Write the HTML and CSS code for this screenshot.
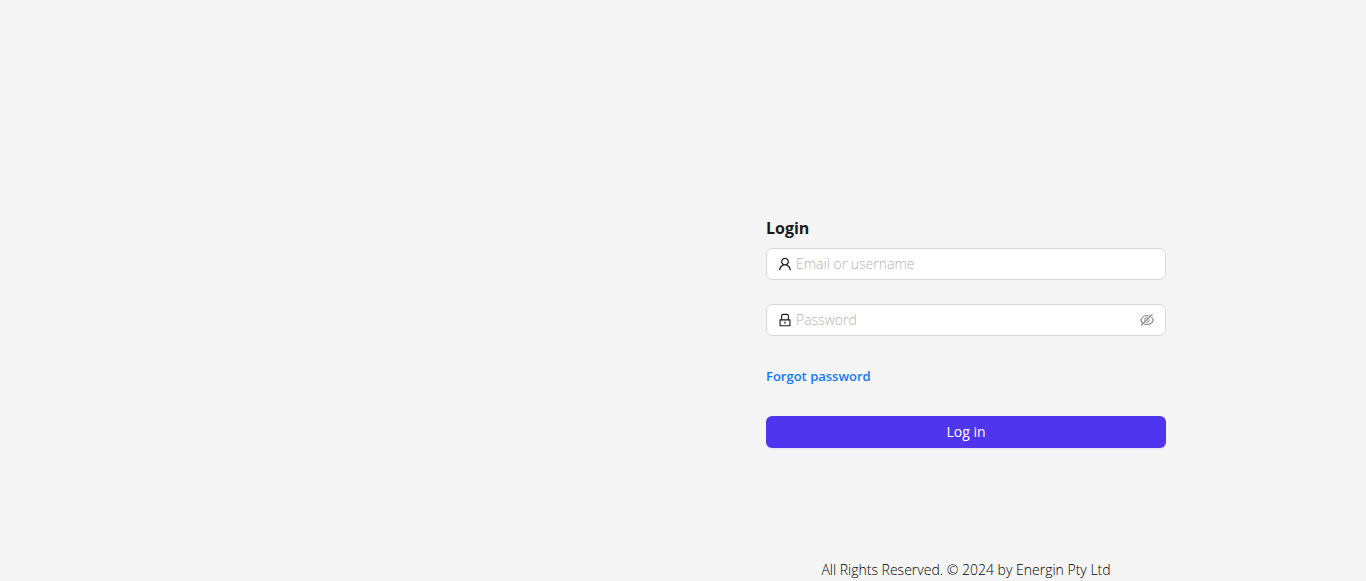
FILE: index.html
```html
<!DOCTYPE html>
<html lang="en">
<head>
<meta charset="utf-8">
<meta name="viewport" content="width=device-width, initial-scale=1">
<title>Login</title>
<link rel="stylesheet" href="styles.css">
</head>
<body>
<div class="page">
  <div class="panel">
    <main class="content">
      <form class="login">
        <h1 class="title">Login</h1>
        <div class="field">
          <label class="icon" for="username" aria-label="Email or username">
            <svg viewBox="64 64 896 896" aria-hidden="true"><path d="M858.5 763.6a374 374 0 00-80.6-119.5 375.63 375.63 0 00-119.5-80.6c-.4-.2-.8-.3-1.2-.5C719.5 518 760 444.7 760 362c0-137-111-248-248-248S264 225 264 362c0 82.7 40.5 156 102.8 201.1-.4.2-.8.3-1.2.5-44.8 18.9-85 46-119.5 80.6a375.63 375.63 0 00-80.6 119.5A371.7 371.7 0 00136 901.8a8 8 0 008 8.2h60c4.4 0 7.9-3.5 8-7.8 2-77.2 33-149.5 87.8-204.3 56.7-56.7 132-87.9 212.2-87.9s155.5 31.2 212.2 87.9C779 752.7 810 825 812 902.2c.1 4.4 3.6 7.8 8 7.8h60a8 8 0 008-8.2c-1-47.8-10.9-94.3-29.5-138.2zM512 534c-45.9 0-89.1-17.9-121.6-50.4S340 407.9 340 362c0-45.9 17.9-89.1 50.4-121.6S466.1 190 512 190s89.1 17.9 121.6 50.4S684 316.1 684 362c0 45.9-17.9 89.1-50.4 121.6S557.9 534 512 534z"/></svg>
          </label>
          <input class="input" id="username" type="text" placeholder="Email or username">
        </div>
        <div class="field">
          <label class="icon" for="password" aria-label="Password">
            <svg viewBox="64 64 896 896" aria-hidden="true"><path d="M832 464h-68V240c0-70.7-57.3-128-128-128H388c-70.7 0-128 57.3-128 128v224h-68c-17.7 0-32 14.3-32 32v384c0 17.7 14.3 32 32 32h640c17.7 0 32-14.3 32-32V496c0-17.7-14.3-32-32-32zM332 240c0-30.9 25.1-56 56-56h248c30.9 0 56 25.1 56 56v224H332V240zm460 600H232V536h560v304zM484 701v53c0 4.4 3.6 8 8 8h40c4.4 0 8-3.6 8-8v-53a48.01 48.01 0 10-56 0z"/></svg>
          </label>
          <input class="input" id="password" type="password" placeholder="Password">
          <button class="icon toggle" type="button" aria-label="Show password">
            <svg viewBox="64 64 896 896" aria-hidden="true"><path d="M942.2 486.2Q889.47 375.11 816.7 305l-50.88 50.88C807.31 395.53 843.45 447.4 874.7 512 791.5 684.2 673.4 766 512 766q-72.67 0-133.87-22.38L323 798.75Q408 838 512 838q288.3 0 430.2-300.3a60.29 60.29 0 000-51.5zm-63.57-320.64L836 122.88a8 8 0 00-11.32 0L715.31 232.2Q624.86 186 512 186q-288.3 0-430.2 300.3a60.3 60.3 0 000 51.5q56.69 119.4 136.5 191.41L112.48 835a8 8 0 000 11.31L155.17 889a8 8 0 0011.31 0l712.15-712.12a8 8 0 000-11.32zM149.3 512C232.6 339.8 350.7 258 512 258c54.54 0 104.13 9.36 149.12 28.39l-70.3 70.3a176 176 0 00-238.13 238.13l-83.42 83.42C223.1 637.49 183.3 582.28 149.3 512zm246.7 0a112.11 112.11 0 01146.2-106.69L401.31 546.2A112 112 0 01396 512z"/><path d="M508 624c-3.46 0-6.87-.16-10.25-.47l-52.82 52.82a176.09 176.09 0 00227.42-227.42l-52.82 52.82c.31 3.38.47 6.79.47 10.25a111.94 111.94 0 01-112 112z"/></svg>
          </button>
        </div>
        <div class="forgot-row"><a class="forgot" href="#">Forgot password</a></div>
        <button class="submit" type="submit">Log in</button>
      </form>
    </main>
    <footer class="footer">All Rights Reserved. © 2024 by Energin Pty Ltd</footer>
  </div>
</div>
</body>
</html>
```
FILE: styles.css
```css
* {
  box-sizing: border-box;
}

body {
  margin: 0;
  background: #f5f5f5;
  color: #1a1a1a;
  font-family: "Segoe UI", "Open Sans", "Noto Sans", sans-serif;
  font-size: 14px;
  line-height: 22px;
}

.page {
  display: grid;
  grid-template-columns: 1fr minmax(0, 800px);
  min-height: 100vh;
}

.panel {
  grid-column: 2;
  display: flex;
  flex-direction: column;
}

.content {
  flex: 1;
  display: flex;
  justify-content: center;
  padding: 216px 16px 24px;
}

.login {
  display: flex;
  flex-direction: column;
  gap: 24px;
  width: 100%;
  max-width: 400px;
}

.title {
  margin: 0 0 -16px;
  font-size: 16px;
  line-height: 24px;
  font-weight: 700;
}

.field {
  display: flex;
  align-items: center;
  gap: 4px;
  height: 32px;
  padding: 0 11px;
  background: #fff;
  border: 1px solid #d9d9d9;
  border-radius: 6px;
}

.icon {
  display: flex;
  flex: none;
  width: 14px;
  height: 14px;
}

.icon svg {
  width: 14px;
  height: 14px;
  fill: currentColor;
}

.toggle {
  padding: 0;
  border: 0;
  background: none;
  color: #8c8c8c;
  cursor: pointer;
}

.input {
  flex: 1;
  min-width: 0;
  padding: 0;
  border: 0;
  outline: 0;
  background: none;
  color: inherit;
  font: inherit;
  font-weight: 300;
}

.input::placeholder {
  color: #b4b4b4;
  opacity: 1;
}

.forgot-row {
  display: flex;
  align-items: center;
  height: 32px;
}

.forgot {
  color: #1677ff;
  font-size: 13px;
  font-weight: 600;
  text-decoration: none;
}

.submit {
  height: 32px;
  padding: 0 16px;
  border: 0;
  border-radius: 6px;
  background: #4f35ee;
  box-shadow: 0 2px 0 rgba(79, 53, 238, 0.06);
  color: #fff;
  font: inherit;
  cursor: pointer;
}

.footer {
  color: #000;
  font-weight: 300;
  text-align: center;
}
```
